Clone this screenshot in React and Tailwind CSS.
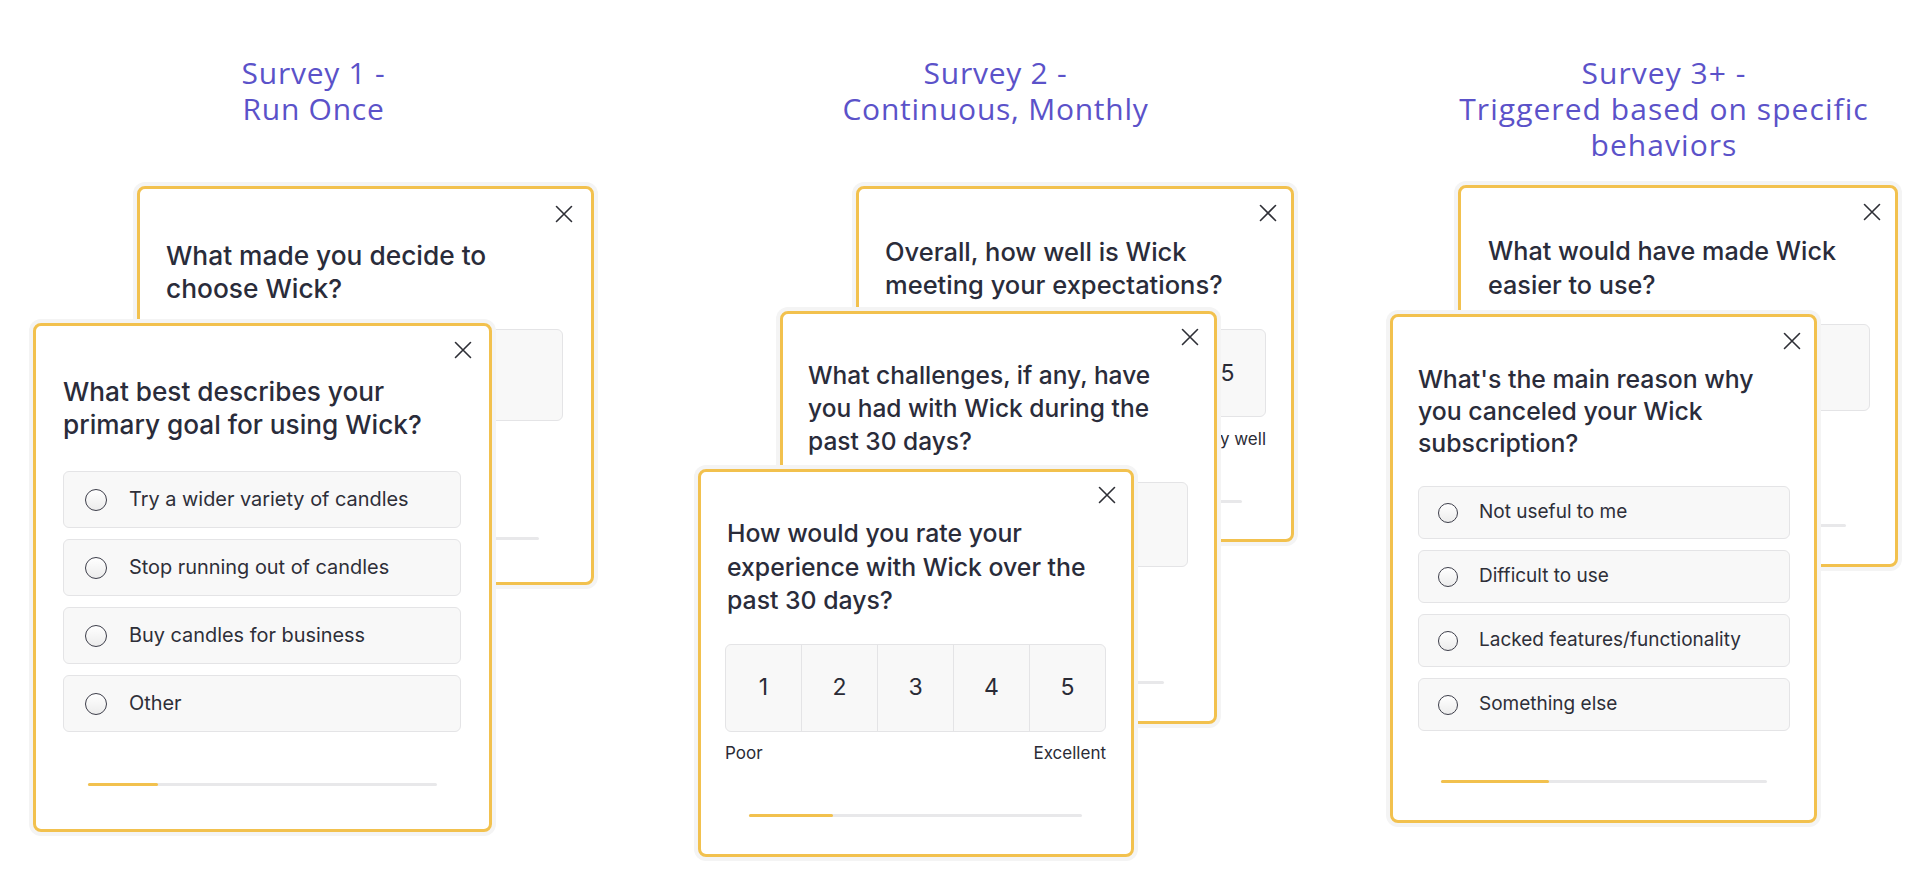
import React from "react";

function CloseIcon() {
  return (
    <svg width="18" height="18" viewBox="0 0 18 18" fill="none" stroke="#2e2f36" strokeWidth="1.6" strokeLinecap="round">
      <path d="M1.5 1.5L16.5 16.5M16.5 1.5L1.5 16.5" />
    </svg>
  );
}

function Card({ className, closeClass, children }) {
  return (
    <div
      className={`absolute flex flex-col rounded-[8px] border-[3px] border-[#f2c14e] bg-white shadow-[0_0_0_4px_#f4f4f4] ${className}`}
    >
      <button type="button" className={`absolute ${closeClass}`}>
        <CloseIcon />
      </button>
      {children}
    </div>
  );
}

function Progress({ className, fill }) {
  return (
    <div className={`h-[3px] rounded-full bg-[#e8e8ea] ${className}`}>
      <div className={`h-full rounded-full bg-[#f2c14e] ${fill}`} />
    </div>
  );
}

function Option({ label, big }) {
  return big ? (
    <div className="flex h-[57px] w-[398px] items-center rounded-[6px] border border-[#e4e4e6] bg-[#f8f8f8]">
      <span className="ml-[21px] h-[22px] w-[22px] rounded-full border-[1.5px] border-[#3d3e4a] bg-linear-to-b from-white to-[#ececec]" />
      <span className="ml-[22px] text-[19.9px] text-[#2e2f38]">{label}</span>
    </div>
  ) : (
    <div className="flex h-[53px] w-[372px] items-center rounded-[6px] border border-[#e4e4e6] bg-[#f8f8f8]">
      <span className="ml-[19px] h-[20px] w-[20px] rounded-full border-[1.5px] border-[#3d3e4a] bg-linear-to-b from-white to-[#ececec]" />
      <span className="ml-[21px] text-[19px] text-[#2e2f38]">{label}</span>
    </div>
  );
}

function Rating({ className }) {
  return (
    <div className={`flex h-[88px] w-[381px] divide-x divide-[#e4e4e6] overflow-hidden rounded-[6px] border border-[#e4e4e6] bg-[#f8f8f8] ${className}`}>
      {[1, 2, 3, 4, 5].map((n) => (
        <div key={n} className="flex flex-1 items-center justify-center text-[23px] text-[#2a2b36]">
          {n}
        </div>
      ))}
    </div>
  );
}

function Title({ children, className = "" }) {
  return (
    <h2
      className={`h-[185px] pt-[55px] text-center font-['Open_Sans',sans-serif] text-[30px] font-medium leading-[36px] tracking-[0.025em] text-[#5b52c9] ${className}`}
    >
      {children}
    </h2>
  );
}

export default function App() {
  return (
    <div className="relative flex h-[869px] w-[1920px] overflow-hidden bg-white font-['Inter',sans-serif]">
      {/* Survey 1 */}
      <div className="ml-[33px] flex w-[561px] flex-col">
        <Title>
          Survey 1 -<br />Run Once
        </Title>
        <div className="relative flex-1">
          <Card className="left-[104px] top-[1px] h-[399px] w-[457px] pl-[26px] pt-[50px]" closeClass="right-[18px] top-[16px]">
            <p className="text-[26.3px] font-medium leading-[33px] text-[#2a2c3a]">
              What made you decide to<br />choose Wick?
            </p>
            <div className="mt-[24px] h-[92px] w-[397px] rounded-[6px] border border-[#e4e4e6] bg-[#f8f8f8]" />
            <Progress className="ml-[26px] mt-[116px] w-[347px]" fill="w-[70px]" />
          </Card>

          <Card className="left-0 top-[138px] h-[509px] w-[459px] pl-[27px] pt-[49px]" closeClass="right-[17px] top-[15px]">
            <p className="text-[26.2px] font-medium leading-[33px] text-[#2a2c3a]">
              What best describes your<br />primary goal for using Wick?
            </p>
            <div className="mt-[30px] flex flex-col gap-[11px]">
              <Option big label="Try a wider variety of candles" />
              <Option big label="Stop running out of candles" />
              <Option big label="Buy candles for business" />
              <Option big label="Other" />
            </div>
            <Progress className="ml-[25px] mt-[51px] w-[349px]" fill="w-[70px]" />
          </Card>
        </div>
      </div>

      {/* Survey 2 */}
      <div className="ml-[103px] flex w-[597px] flex-col">
        <Title>
          Survey 2 -<br />Continuous, Monthly
        </Title>
        <div className="relative flex-1">
          <Card className="left-[159px] top-[1px] h-[356px] w-[438px] pl-[26px] pt-[46px]" closeClass="right-[14px] top-[15px]">
            <p className="text-[25.5px] font-medium leading-[33px] text-[#2a2c3a]">
              Overall, how well is Wick<br />meeting your expectations?
            </p>
            <Rating className="mt-[28px]" />
            <div className="mt-[11px] flex w-[381px] justify-between text-[17px] leading-[22px] text-[#2a2b36]">
              <span>Not at all</span>
              <span>Extremely well</span>
            </div>
            <Progress className="ml-[23px] mt-[50px] w-[334px]" fill="w-[84px]" />
          </Card>

          <Card className="left-[83px] top-[126px] h-[413px] w-[437px] pl-[25px] pt-[45px]" closeClass="right-[15px] top-[14px]">
            <p className="text-[24.5px] font-medium leading-[33px] text-[#2a2c3a]">
              What challenges, if any, have<br />you had with Wick during the<br />past 30 days?
            </p>
            <div className="mt-[24px] h-[85px] w-[380px] rounded-[6px] border border-[#e4e4e6] bg-[#f8f8f8]" />
            <Progress className="ml-[25px] mt-[114px] w-[331px]" fill="w-[84px]" />
          </Card>

          <Card className="left-[1px] top-[284px] h-[388px] w-[436px] pl-[26px] pt-[45px]" closeClass="right-[15px] top-[14px]">
            <p className="text-[24.8px] font-medium leading-[33.5px] text-[#2a2c3a]">
              How would you rate your<br />experience with Wick over the<br />past 30 days?
            </p>
            <Rating className="-ml-[2px] mt-[26px]" />
            <div className="-ml-[2px] mt-[10px] flex w-[381px] justify-between text-[17px] leading-[22px] text-[#2a2b36]">
              <span>Poor</span>
              <span>Excellent</span>
            </div>
            <Progress className="ml-[22px] mt-[50px] w-[333px]" fill="w-[84px]" />
          </Card>
        </div>
      </div>

      {/* Survey 3 */}
      <div className="ml-[95px] flex w-[510px] flex-col">
        <Title className="pl-[40px] tracking-[0.035em]">
          Survey 3+ -<br />Triggered based on specific<br />behaviors
        </Title>
        <div className="relative flex-1">
          <Card className="left-[69px] top-0 h-[382px] w-[440px] pl-[27px] pt-[46px]" closeClass="right-[14px] top-[15px]">
            <p className="text-[25.2px] font-medium leading-[34px] text-[#2a2c3a]">
              What would have made Wick<br />easier to use?
            </p>
            <div className="mt-[22px] h-[87px] w-[382px] rounded-[6px] border border-[#e4e4e6] bg-[#f8f8f8]" />
            <Progress className="ml-[22px] mt-[113px] w-[336px]" fill="w-[108px]" />
          </Card>

          <Card className="left-[1px] top-[129px] h-[509px] w-[427px] pl-[25px] pt-[46px]" closeClass="right-[13px] top-[15px]">
            <p className="text-[24.8px] font-medium leading-[32px] text-[#2a2c3a]">
              What's the main reason why<br />you canceled your Wick<br />subscription?
            </p>
            <div className="mt-[27px] flex flex-col gap-[11px]">
              <Option label="Not useful to me" />
              <Option label="Difficult to use" />
              <Option label="Lacked features/functionality" />
              <Option label="Something else" />
            </div>
            <Progress className="ml-[23px] mt-[49px] w-[326px]" fill="w-[108px]" />
          </Card>
        </div>
      </div>
    </div>
  );
}
